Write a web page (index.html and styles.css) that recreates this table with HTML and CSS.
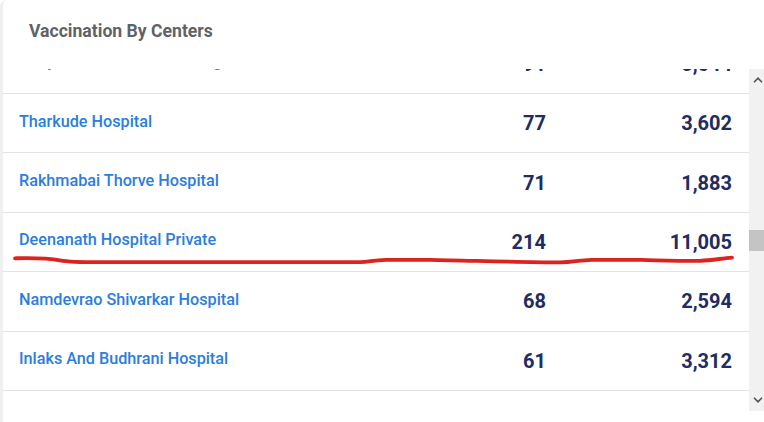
FILE: index.html
```html
<!DOCTYPE html>
<html lang="en">
<head>
<meta charset="utf-8">
<title>Vaccination By Centers</title>
<link rel="stylesheet" href="styles.css">
</head>
<body>
<div class="card">
  <h2 class="title">Vaccination By Centers</h2>
  <div class="table-wrap">
    <div class="viewport">
      <div class="rows">
        <div class="row"><a class="name">Ruby Hall Clinic Sahakarnagar</a><span class="num">91</span><span class="num">5,644</span></div>
        <div class="row"><a class="name">Tharkude Hospital</a><span class="num">77</span><span class="num">3,602</span></div>
        <div class="row"><a class="name">Rakhmabai Thorve Hospital</a><span class="num">71</span><span class="num">1,883</span></div>
        <div class="row"><a class="name">Deenanath Hospital Private</a><span class="num">214</span><span class="num">11,005</span></div>
        <div class="row"><a class="name">Namdevrao Shivarkar Hospital</a><span class="num">68</span><span class="num">2,594</span></div>
        <div class="row"><a class="name">Inlaks And Budhrani Hospital</a><span class="num">61</span><span class="num">3,312</span></div>
        <div class="row"><a class="name">Sahyadri Hospital Hadapsar</a><span class="num">58</span><span class="num">2,917</span></div>
      </div>
    </div>
    <div class="scrollbar">
      <div class="sb-btn">
        <svg width="10" height="6" viewBox="0 0 10 6"><path d="M1 5.2 L5 1.2 L9 5.2" fill="none" stroke="#505050" stroke-width="1.6"/></svg>
      </div>
      <div class="sb-track"><div class="sb-thumb"></div></div>
      <div class="sb-btn">
        <svg width="10" height="6" viewBox="0 0 10 6"><path d="M1 0.8 L5 4.8 L9 0.8" fill="none" stroke="#505050" stroke-width="1.6"/></svg>
      </div>
    </div>
  </div>
  <svg class="annotation" width="764" height="422" viewBox="0 0 764 422">
    <path d="M15,258.3 C30,258 45,257.6 60,260.3 C70,262.2 80,262.2 100,262.2 L360,262.2 C370,261.8 373,260 386,259.8 L430,259.8 C470,260.5 520,262.4 560,262.4 C574,262.4 577,260.2 592,259.9 L640,259.9 C660,260.6 682,261.4 700,260.8 C713,260.3 721,258.4 732,257.6" fill="none" stroke="#dc231d" stroke-width="3.8" stroke-linecap="round" stroke-linejoin="round"/>
  </svg>
</div>
</body>
</html>
```

FILE: styles.css
```css
* {
  box-sizing: border-box;
}

html, body {
  margin: 0;
  padding: 0;
  background: #ffffff;
}

body {
  font-family: Roboto, "Liberation Sans", Arial, sans-serif;
  width: 764px;
  height: 422px;
  overflow: hidden;
}

.card {
  position: relative;
  width: 764px;
  height: 422px;
  background: #ffffff;
  border-left: 3px solid #eef0f2;
  border-top-left-radius: 6px;
}

.title {
  margin: 0;
  padding: 19px 0 26px 26px;
  font-size: 17.6px;
  line-height: 24px;
  font-weight: 700;
  color: #5f6368;
}

.table-wrap {
  display: flex;
  height: 342px;
}

.viewport {
  flex: 1;
  overflow: hidden;
}

.rows {
  margin-top: -34.4px;
}

.row {
  display: grid;
  grid-template-columns: 1fr 100px 186px;
  align-items: center;
  height: 59.4px;
  padding: 0 17px 0 16px;
  border-bottom: 1px solid #e1e3e7;
}

.name {
  font-size: 16.2px;
  font-weight: 500;
  color: #2a7de4;
  margin-bottom: 4px;
  white-space: nowrap;
}

.num {
  text-align: right;
  font-size: 20px;
  font-weight: 700;
  color: #202c62;
}

.scrollbar {
  width: 15px;
  height: 342px;
  background: #f1f1f1;
  display: flex;
  flex-direction: column;
}

.sb-btn {
  height: 22px;
  display: flex;
  align-items: center;
  justify-content: center;
  padding-left: 2px;
}

.sb-track {
  flex: 1;
}

.sb-thumb {
  margin-top: 139px;
  height: 21px;
  background: #c4c4c4;
}

.annotation {
  position: absolute;
  left: -3px;
  top: 0;
  pointer-events: none;
}
```
